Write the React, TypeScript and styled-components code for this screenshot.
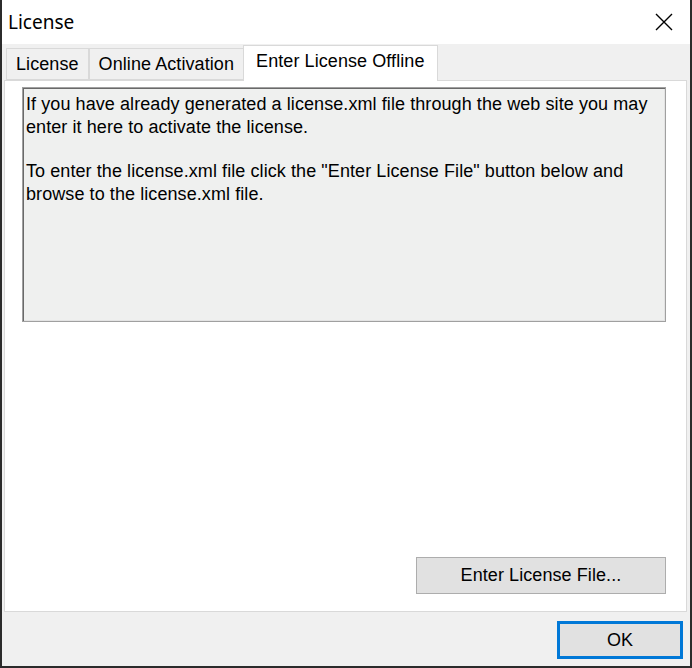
import React from "react";
import styled, { createGlobalStyle } from "styled-components";

const Global = createGlobalStyle`
  html, body { margin: 0; padding: 0; background: #ffffff; }
  * { box-sizing: border-box; }
`;

const Window = styled.div`
  width: 692px;
  height: 668px;
  display: flex;
  flex-direction: column;
  background: #f0f0f0;
  border-left: 2px solid #2b2b2b;
  border-right: 2px solid #2b2b2b;
  border-bottom: 2px solid #2b2b2b;
  font-family: "Liberation Sans", Arial, sans-serif;
  letter-spacing: 0.08px;
  color: #000;
`;

const TitleBar = styled.div`
  height: 44px;
  background: #ffffff;
  display: flex;
  align-items: center;
  justify-content: space-between;
  padding: 0 12px 0 6px;
  flex: none;
`;

const Title = styled.span`
  font-family: "Noto Sans", "Open Sans", sans-serif;
  font-size: 19px;
  letter-spacing: 0;
  padding-bottom: 1px;
`;

const Close = styled.svg`
  width: 18px;
  height: 18px;
  margin-right: 5px;
`;

const Body = styled.div`
  flex: 1;
  display: flex;
  flex-direction: column;
  padding: 1px 3px 0 2px;
`;

const TabRow = styled.div`
  display: flex;
  align-items: flex-end;
  height: 35px;
  padding-left: 2px;
  flex: none;
`;

const Tab = styled.div<{ $active?: boolean }>`
  height: ${(p) => (p.$active ? 36 : 32)}px;
  margin-bottom: ${(p) => (p.$active ? -1 : 0)}px;
  padding: 0 ${(p) => (p.$active ? 12 : 9)}px;
  display: flex;
  align-items: center;
  font-size: 18px;
  background: ${(p) => (p.$active ? "#ffffff" : "#f0f0f0")};
  border: 1px solid #d9d9d9;
  border-bottom: ${(p) => (p.$active ? "none" : "1px solid #d9d9d9")};
  margin-left: ${(p) => (p.$active ? -1 : 0)}px;
  position: relative;
  z-index: ${(p) => (p.$active ? 1 : 0)};
  padding-bottom: ${(p) => (p.$active ? 4 : 0)}px;
  & + & { border-left: ${(p) => (p.$active ? "1px solid #d9d9d9" : "none")}; }
`;

const Panel = styled.div`
  height: 532px;
  background: #ffffff;
  border: 1px solid #d9d9d9;
  display: flex;
  flex-direction: column;
  padding: 6px 20px 17px 17px;
  flex: none;
`;

const InfoBox = styled.div`
  height: 235px;
  background: #eff0ef;
  border: 1px solid #a0a0a0;
  box-shadow: inset 1px 1px 0 #696969, inset -1px -1px 0 #e3e3e3;
  padding: 5px 3px;
  font-size: 18px;
  line-height: 22.5px;
`;

const Para = styled.p`
  margin: 0 0 22px 0;
`;

const Spacer = styled.div`
  flex: 1;
`;

const ButtonRow = styled.div`
  display: flex;
  justify-content: flex-end;
`;

const Button = styled.button<{ $w: number; $default?: boolean }>`
  width: ${(p) => p.$w}px;
  height: ${(p) => (p.$default ? 38 : 37)}px;
  background: #e1e1e1;
  border: ${(p) => (p.$default ? "3px solid #0078d7" : "1px solid #adadad")};
  font-family: "Liberation Sans", Arial, sans-serif;
  font-size: 18px;
  letter-spacing: 0.08px;
  color: #000;
  padding: 0;
  display: flex;
  align-items: center;
  justify-content: center;
`;

const Footer = styled.div`
  display: flex;
  justify-content: flex-end;
  padding: 9px 4px 0 0;
`;

export default function App() {
  return (
    <>
      <Global />
      <Window>
        <TitleBar>
          <Title>License</Title>
          <Close viewBox="0 0 18 18">
            <path d="M1 1 L17 17 M17 1 L1 17" stroke="#000" strokeWidth="1.4" fill="none" />
          </Close>
        </TitleBar>
        <Body>
          <TabRow>
            <Tab>License</Tab>
            <Tab>Online Activation</Tab>
            <Tab $active>Enter License Offline</Tab>
          </TabRow>
          <Panel>
            <InfoBox>
              <Para>
                If you have already generated a license.xml file through the web site you may
                enter it here to activate the license.
              </Para>
              <Para>
                To enter the license.xml file click the "Enter License File" button below and
                browse to the license.xml file.
              </Para>
            </InfoBox>
            <Spacer />
            <ButtonRow>
              <Button $w={250}>Enter License File...</Button>
            </ButtonRow>
          </Panel>
          <Footer>
            <Button $w={126} $default>OK</Button>
          </Footer>
        </Body>
      </Window>
    </>
  );
}
